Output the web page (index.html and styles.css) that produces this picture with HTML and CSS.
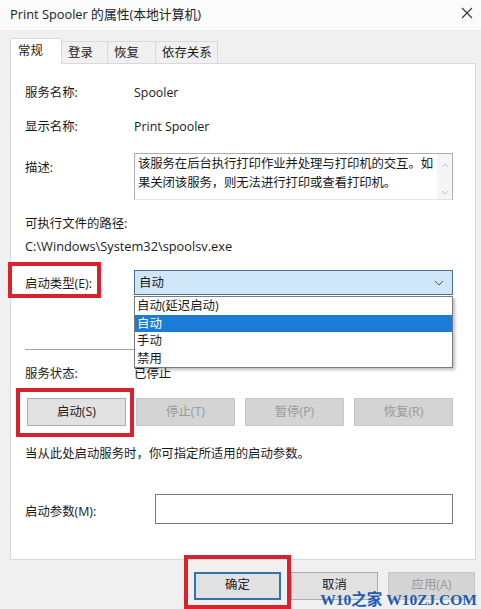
FILE: index.html
```html
<!DOCTYPE html>
<html lang="zh-CN">
<head>
  <meta charset="UTF-8" />
  <title>Print Spooler 的属性(本地计算机)</title>
  <link rel="stylesheet" href="styles.css">
</head>
<body>

  <div class="titlebar">
    <span class="title">Print Spooler 的属性(本地计算机)</span>
    <svg class="close" width="12" height="12" viewBox="0 0 12 12">
      <path d="M1 1 L11 11 M11 1 L1 11" stroke="#333" stroke-width="1.1" fill="none"/>
    </svg>
  </div>

  <div class="tabs">
    <div class="tab active">常规</div>
    <div class="tab w46">登录</div>
    <div class="tab w48">恢复</div>
    <div class="tab w62">依存关系</div>
  </div>

  <div class="panel">
    <div class="row">
      <div class="label">服务名称:</div>
      <div class="value">Spooler</div>
    </div>
    <div class="row r2">
      <div class="label">显示名称:</div>
      <div class="value">Print Spooler</div>
    </div>
    <div class="row desc-row">
      <div class="label desc-label">描述:</div>
      <div class="textarea">
        <div class="textarea-text">该服务在后台执行打印作业并处理与打印机的交互。如果关闭该服务，则无法进行打印或查看打印机。</div>
        <div class="scrollbar">
          <svg width="8" height="6" viewBox="0 0 8 6"><path d="M1 5 L4 2 L7 5" stroke="#c2c2c2" fill="none"/></svg>
          <svg width="8" height="6" viewBox="0 0 8 6"><path d="M1 1 L4 4 L7 1" stroke="#c2c2c2" fill="none"/></svg>
        </div>
      </div>
    </div>

    <div class="path-label">可执行文件的路径:</div>
    <div class="path">C:\Windows\System32\spoolsv.exe</div>

    <div class="row startup-row">
      <div class="label">启动类型(E):</div>
      <div class="combo-wrap">
        <div class="combo">
          <span>自动</span>
          <svg width="10" height="6" viewBox="0 0 10 6"><path d="M1 1 L5 5 L9 1" stroke="#555" stroke-width="1" fill="none"/></svg>
        </div>
        <div class="dropdown">
          <div class="option">自动(延迟启动)</div>
          <div class="option selected">自动</div>
          <div class="option">手动</div>
          <div class="option">禁用</div>
        </div>
      </div>
    </div>

    <div class="separator"></div>

    <div class="row status-row">
      <div class="label">服务状态:</div>
      <div class="value">已停止</div>
    </div>

    <div class="service-buttons">
      <div class="btn">启动(S)</div>
      <div class="btn disabled">停止(T)</div>
      <div class="btn disabled">暂停(P)</div>
      <div class="btn disabled">恢复(R)</div>
    </div>

    <div class="note">当从此处启动服务时，你可指定所适用的启动参数。</div>

    <div class="row param-row">
      <div class="label param-label">启动参数(M):</div>
      <div class="input"></div>
    </div>
  </div>

  <div class="dialog-buttons">
    <div class="btn dlg default">确定</div>
    <div class="btn dlg">取消</div>
    <div class="btn dlg disabled">应用(A)</div>
  </div>

  <!-- red highlight boxes -->
  <div class="mark mark-type"></div>
  <div class="mark mark-start"></div>
  <div class="mark mark-ok"></div>

  <div class="watermark">W10之家 W10ZJ.COM</div>

</body>
</html>
```

FILE: styles.css
```css
body {
  margin: 0;
  width: 481px;
  height: 609px;
  background: #f0f0f0;
  font-family: 'Open Sans', 'Noto Sans CJK SC', sans-serif;
  font-size: 12.4px;
  color: #1a1a1a;
  position: relative;
  overflow: hidden;
}

.titlebar {
  height: 30px;
  background: #fbfbfb;
  display: flex;
  align-items: center;
  justify-content: space-between;
  padding: 0 8px 0 10px;
}

.title {
  font-size: 12.8px;
  color: #222;
  margin-top: -4px;
}

.close {
  margin-top: -4px;
}

.tabs {
  display: flex;
  align-items: flex-end;
  margin: 8px 0 0 10px;
  height: 25px;
}

.tab {
  height: 22px;
  line-height: 22px;
  padding-left: 6px;
  box-sizing: border-box;
  border: 1px solid #d9d9d9;
  border-bottom: none;
  border-left: none;
  background: #f0f0f0;
}

.tab.active {
  width: 52px;
  height: 26px;
  line-height: 24px;
  background: #fff;
  border-left: 1px solid #d9d9d9;
  padding-left: 7px;
  position: relative;
  z-index: 1;
  margin-bottom: -1px;
}

.w46 { width: 46px; }
.w48 { width: 48px; }
.w62 { width: 62px; }

.panel {
  margin-left: 10px;
  width: 466px;
  height: 497px;
  box-sizing: border-box;
  background: #fff;
  border: 1px solid #d9d9d9;
  padding: 19px 0 0 14px;
}

.row {
  display: flex;
  line-height: 20px;
}

.label {
  width: 109px;
  flex-shrink: 0;
}

.r2 { margin-top: 14px; }

.desc-row { margin-top: 16px; }

.desc-label { padding-top: 5px; }

.textarea {
  width: 319px;
  height: 47px;
  box-sizing: border-box;
  border: 1px solid #abadb3;
  border-bottom-color: #e3e3e3;
  display: flex;
}

.textarea-text {
  flex: 1;
  padding: 0 4px 0 3px;
  line-height: 19px;
  letter-spacing: -0.1px;
}

.scrollbar {
  width: 15px;
  background: #f5f5f5;
  display: flex;
  flex-direction: column;
  justify-content: space-between;
  align-items: center;
  padding: 8px 0 3px;
}

.path-label {
  margin-top: 14px;
  line-height: 20px;
}

.path {
  margin-top: 2px;
  line-height: 20px;
  font-size: 12.8px;
}

.startup-row {
  margin-top: 14px;
  line-height: 25px;
}

.startup-row .label { padding-top: 1px; }

.combo-wrap {
  position: relative;
  width: 319px;
}

.combo {
  height: 25px;
  box-sizing: border-box;
  border: 1px solid #4a6f93;
  background: #cfe5f8;
  display: flex;
  align-items: center;
  justify-content: space-between;
  padding: 0 8px 0 4px;
}

.dropdown {
  position: absolute;
  top: 26px;
  left: 0;
  right: 0;
  background: #fff;
  border: 1px solid #7a7a7a;
  box-shadow: 2px 2px 3px rgba(0,0,0,0.25);
  z-index: 2;
}

.option {
  height: 17.5px;
  line-height: 17px;
  padding-left: 2px;
}

.option.selected {
  background: #1a7cd6;
  color: #fff;
}

.separator {
  margin-top: 53px;
  width: 428px;
  height: 1px;
  background: #a5a5a5;
}

.status-row { margin-top: 14px; }

.service-buttons {
  display: flex;
  justify-content: space-between;
  margin: 14px 0 0 2px;
  width: 426px;
}

.btn {
  width: 99px;
  height: 28px;
  box-sizing: border-box;
  display: flex;
  align-items: center;
  justify-content: center;
  line-height: 14px;
  background: #e1e1e1;
  border: 1px solid #adadad;
  color: #222;
}

.btn.disabled {
  background: #d4d4d4;
  border-color: #c6c6c6;
  color: #9a9a9a;
}

.note {
  margin-top: 18px;
  line-height: 20px;
}

.param-row {
  margin-top: 30px;
  align-items: center;
}

.param-label {
  width: 130px;
  padding-top: 6px;
}

.input {
  width: 298px;
  height: 30px;
  box-sizing: border-box;
  border: 1px solid #7a7a7a;
  background: #fff;
}

.dialog-buttons {
  display: flex;
  justify-content: flex-end;
  gap: 10px;
  margin-top: 12px;
  padding-right: 6px;
}

.btn.dlg {
  width: 87px;
  padding-bottom: 2px;
}

.btn.default {
  border: 2px solid #2f74ab;
}

.mark {
  position: absolute;
  border: 4px solid #d8232d;
  box-sizing: border-box;
}

.mark-type {
  left: 8px;
  top: 262px;
  width: 93px;
  height: 36px;
}

.mark-start {
  left: 16px;
  top: 388px;
  width: 118px;
  height: 49px;
}

.mark-ok {
  left: 184px;
  top: 555px;
  width: 107px;
  height: 54px;
}

.watermark {
  position: absolute;
  right: 4px;
  bottom: 3px;
  font-family: 'Liberation Serif', 'Noto Sans CJK SC', serif;
  font-weight: bold;
  font-size: 15.5px;
  color: #1d5cb3;
  line-height: 13px;
}
```
